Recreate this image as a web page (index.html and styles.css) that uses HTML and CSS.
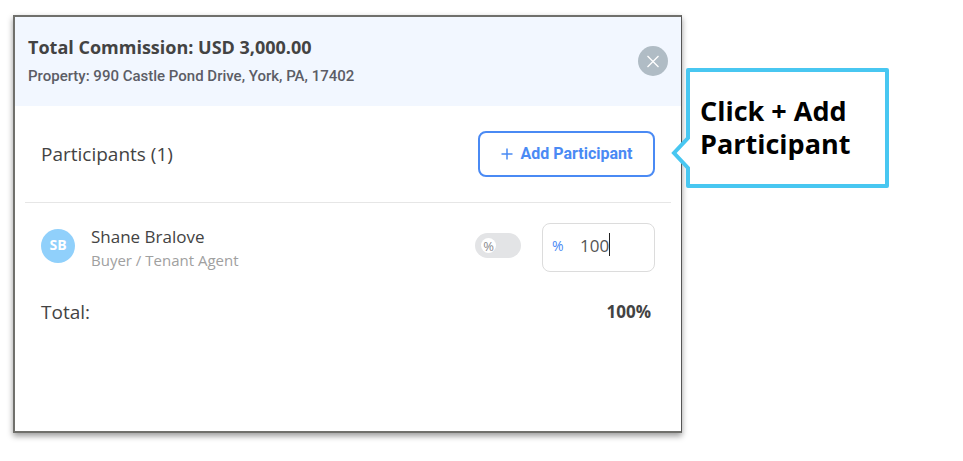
FILE: index.html
```html
<!DOCTYPE html>
<html lang="en">
<head>
<meta charset="utf-8">
<title>Total Commission</title>
<link rel="stylesheet" href="styles.css">
</head>
<body>
<main class="stage">
  <section class="panel">
    <header class="panel-header">
      <div>
        <h1 class="title">Total Commission: USD 3,000.00</h1>
        <p class="property">Property: 990 Castle Pond Drive, York, PA, 17402</p>
      </div>
      <button class="close" type="button" aria-label="Close">
        <svg width="14" height="14" viewBox="0 0 14 14"><path d="M1.5 2l11 11M12.500 2l-11 11" stroke="#fff" stroke-width="1.3" fill="none"/></svg>
      </button>
    </header>
    <div class="panel-body">
      <div class="row row-heading">
        <h2 class="heading">Participants (1)</h2>
        <button class="add" type="button">
          <svg width="12" height="12" viewBox="0 0 12 12" aria-hidden="true"><path d="M6 .5v11M.5 6h11" stroke="currentColor" stroke-width="1.5" fill="none"/></svg>
          Add Participant
        </button>
      </div>
      <div class="row row-person">
        <div class="avatar">SB</div>
        <div class="person">
          <div class="name">Shane Bralove</div>
          <div class="role">Buyer / Tenant Agent</div>
        </div>
        <button class="toggle" type="button" role="switch" aria-checked="false" aria-label="Percentage"><span class="knob">%</span></button>
        <label class="share">
          <span class="unit">%</span>
          <input class="amount" type="text" value="100" aria-label="Share in percent">
          <span class="caret"></span>
        </label>
      </div>
      <div class="row row-total">
        <div class="heading">Total:</div>
        <div class="total">100%</div>
      </div>
    </div>
  </section>
  <aside class="callout">
    <svg class="pointer" width="20" height="36" viewBox="0 0 20 36" aria-hidden="true"><path d="M20 0h-2v3L4 18l14 15v3h2z" fill="#fff"/><path d="M18 0v3L4 18l14 15v3" fill="none" stroke="#48c7f1" stroke-width="4"/></svg>
    Click + Add Participant
  </aside>
</main>
</body>
</html>
```
FILE: styles.css
```css
* { box-sizing: border-box; }
body {
  margin: 0;
  background: #fff;
  color: #434343;
  font-family: "Open Sans", "Noto Sans", sans-serif;
}
h1, h2, p { margin: 0; }
button { font: inherit; cursor: pointer; }

.stage {
  display: flex;
  align-items: flex-start;
  gap: 4px;
  min-height: 100vh;
  padding: 15px 74px 28px 13px;
}

.panel {
  flex: 1;
  align-self: stretch;
  background: #fff;
  border: 2px solid #70706c;
  border-right-width: 1px;
  border-right-color: #555;
  box-shadow: 0 3px 6px rgba(0, 0, 0, .4);
}
.panel-header {
  display: flex;
  justify-content: space-between;
  align-items: center;
  height: 89px;
  padding: 0 13px 2px;
  background: #f2f7ff;
}
.title {
  font-size: 18px;
  line-height: 24px;
  font-weight: 700;
}
.property {
  margin-top: 6px;
  color: #5c5d66;
  font: 500 15px/22px Roboto, sans-serif;
}
.close {
  display: grid;
  place-items: center;
  width: 30px;
  height: 30px;
  padding: 0;
  border: 0;
  border-radius: 50%;
  background: #b0bcc5;
}

.panel-body { padding: 0 10px; }
.row {
  display: flex;
  align-items: center;
  padding: 0 16px;
}
.row-heading {
  justify-content: space-between;
  height: 97px;
  border-bottom: 1px solid #e6e6e6;
}
.heading {
  font-size: 19px;
  line-height: 26px;
  font-weight: 400;
}
.add {
  display: flex;
  align-items: center;
  justify-content: center;
  gap: 8px;
  width: 177px;
  height: 46px;
  padding: 0;
  border: 2px solid #4a8af4;
  border-radius: 8px;
  background: #fff;
  color: #4a8af4;
  font: 700 16px/20px Roboto, sans-serif;
}

.row-person { padding-top: 20px; }
.avatar {
  width: 34px;
  height: 34px;
  margin-bottom: 4px;
  border-radius: 50%;
  background: #90d0fb;
  color: #fff;
  font-size: 14px;
  line-height: 31px;
  font-weight: 700;
  text-align: center;
}
.person {
  flex: 1;
  margin-left: 16px;
}
.name {
  font-size: 17px;
  line-height: 24px;
}
.role {
  color: #a0a0a0;
  font-size: 15px;
  line-height: 22px;
}
.toggle {
  width: 46px;
  height: 25px;
  margin-right: 21px;
  margin-bottom: 4px;
  padding: 0 6px;
  border: 0;
  border-radius: 13px;
  background: #e3e4e6;
}
.knob {
  display: block;
  width: 15px;
  height: 15px;
  border-radius: 50%;
  background: #fff;
  color: #8a8a8e;
  font-size: 13px;
  line-height: 16px;
}
.share {
  position: relative;
  display: flex;
  align-items: center;
  width: 113px;
  height: 49px;
  padding: 0 9px 4px;
  border: 1px solid #dcdcdc;
  border-radius: 8px;
}
.unit {
  width: 28px;
  color: #4a8af4;
  font-size: 14px;
}
.amount {
  flex: 1;
  min-width: 0;
  padding: 0;
  border: 0;
  outline: 0;
  background: none;
  color: #555;
  font: 400 17px/24px "Open Sans", sans-serif;
}
.caret {
  position: absolute;
  left: 66px;
  top: 9px;
  width: 1px;
  height: 23px;
  background: #222;
}
.row-total {
  justify-content: space-between;
  padding-top: 27px;
  padding-right: 20px;
}
.total {
  font-size: 17px;
  line-height: 26px;
  font-weight: 700;
}

.callout {
  position: relative;
  width: 203px;
  margin-top: 53px;
  padding: 22px 10px 24px;
  border: 4px solid #48c7f1;
  border-radius: 2px;
  background: #fff;
  color: #000;
  font-size: 27px;
  line-height: 33px;
  font-weight: 700;
}
.pointer {
  position: absolute;
  left: -20px;
  top: 63px;
}
```
